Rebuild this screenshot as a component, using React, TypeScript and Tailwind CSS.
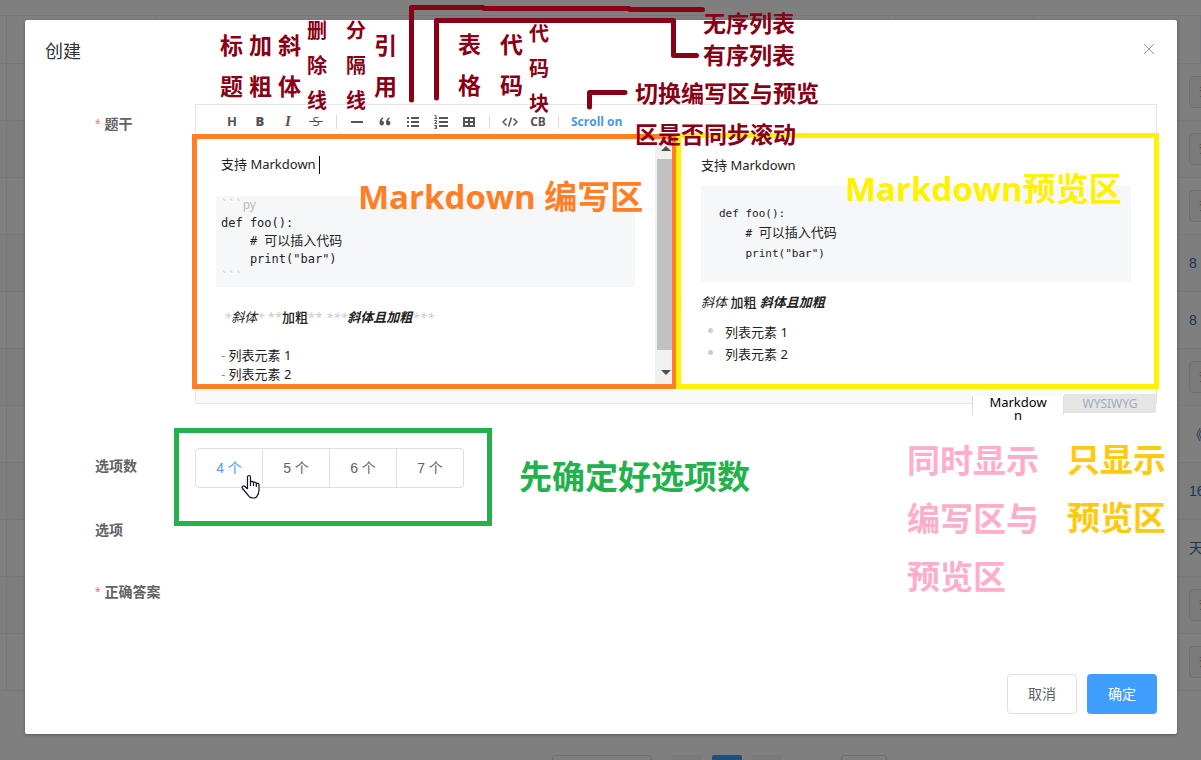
import React from "react";

const rows = [
  "button", "button", "button", "8", "8", "button", "《", "16", "天", "button", "button",
];

const columns = [
  "w-[7px]", "w-[150px]", "w-[152px]", "w-[145px]", "w-[145px]",
  "w-[145px]", "w-[145px]", "w-[145px]", "w-[145px]", "w-auto",
];

function BackgroundPage() {
  return (
    <div className="pt-[15px]" aria-hidden="true">
      <table className="w-full table-fixed border-separate border-spacing-0 border-t border-[#ebeef5]">
        <thead>
          <tr>
            {columns.map((width, i) => (
              <th key={i} className={`${width} h-12 border-r border-b border-[#ebeef5] p-0`} />
            ))}
          </tr>
        </thead>
        <tbody>
          {rows.map((value, r) => (
            <tr key={r} className="odd:bg-white even:bg-[#fafafa]">
              {columns.slice(1).map((_, c) => (
                <td key={c} className="h-[57px] border-r border-b border-[#ebeef5] p-0" />
              ))}
              <td className="h-[57px] overflow-hidden border-b border-[#ebeef5] py-0 pr-0 pl-[10px] text-sm whitespace-nowrap text-[#2f6ba8]">
                {value === "button" ? (
                  <button tabIndex={-1} className="block h-8 w-14 rounded border border-[#dcdfe6] bg-[#f5f5f5] text-left text-xs text-[#c98a5a]">
                    <span className="pl-[9px]">查看</span>
                  </button>
                ) : (
                  value
                )}
              </td>
            </tr>
          ))}
        </tbody>
      </table>
      <div className="flex justify-center pt-16 pl-[238px]">
        <div className="h-7 w-[100px] rounded-[3px] border border-[#dcdfe6]" />
        <div className="ml-5 h-7 w-[30px] rounded-xs bg-[#f4f4f5]" />
        <div className="ml-[10px] h-7 w-[30px] rounded-xs bg-[#409eff]" />
        <div className="ml-[10px] h-7 w-[30px] rounded-xs bg-[#f4f4f5]" />
        <div className="ml-[59px] h-7 w-[46px] rounded-[3px] border border-[#dcdfe6]" />
      </div>
    </div>
  );
}

function ToolButton({ label, children }: { label: string; children: React.ReactNode }) {
  return (
    <button
      type="button"
      aria-label={label}
      className="flex h-8 w-7 shrink-0 items-center justify-center text-[13px] font-bold text-[#555]"
    >
      {children}
    </button>
  );
}

function Divider() {
  return (
    <span className="flex w-[13px] shrink-0 justify-center">
      <span className="h-[14px] w-px bg-[#ddd]" />
    </span>
  );
}

function Toolbar() {
  return (
    <div className="flex h-8 items-center pt-px pl-[22px] font-['Open_Sans','Noto_Sans_CJK_SC',sans-serif]">
      <ToolButton label="标题"><span>H</span></ToolButton>
      <ToolButton label="加粗"><span className="font-extrabold">B</span></ToolButton>
      <ToolButton label="斜体"><span className="font-['Liberation_Serif',serif] text-[15px] font-bold italic">I</span></ToolButton>
      <ToolButton label="删除线"><span className="font-normal line-through">&nbsp;S&nbsp;</span></ToolButton>
      <Divider />
      <ToolButton label="分隔线">
        <svg width="12" height="12" viewBox="0 0 12 12"><path d="M0 5h12v2H0z" fill="#555" /></svg>
      </ToolButton>
      <ToolButton label="引用">
        <svg width="12" height="10" viewBox="0 0 12 10" fill="#555">
          <path d="M4.8 1 3.9.6C1.600 1.500.5 3.500.5 6A2.300 2.300 0 1 0 3 3.800C3 2.700 3.700 1.600 4.800 1zM11.200 1l-.9-.4C8 1.500 6.900 3.500 6.900 6a2.300 2.300 0 1 0 2.500-2.200c0-1.100.7-2.200 1.800-2.800z" />
        </svg>
      </ToolButton>
      <ToolButton label="无序列表">
        <svg width="12" height="12" viewBox="0 0 12 12" fill="#555">
          <path d="M0 1h2v2H0zM4 1h8v2H4zM0 5h2v2H0zM4 5h8v2H4zM0 9h2v2H0zM4 9h8v2H4z" />
        </svg>
      </ToolButton>
      <ToolButton label="有序列表">
        <svg width="14" height="14" viewBox="0 0 14 14">
          <path d="M5 2h9v2H5zM5 6h9v2H5zM5 10h9v2H5z" fill="#555" />
          <path d="M.5.5H2v3M.3 3.500h3M.3 5.500H2.500V7L.7 8.500h2.500M.3 10.500h2.200v3H.3M1 12h1.500" fill="none" stroke="#555" />
        </svg>
      </ToolButton>
      <ToolButton label="表格">
        <svg width="12" height="10" viewBox="0 0 12 10">
          <path d="M1 1h10v8H1zM6 1v8M1 5h10" fill="none" stroke="#555" strokeWidth="2" />
        </svg>
      </ToolButton>
      <Divider />
      <ToolButton label="代码">
        <svg width="16" height="10" viewBox="0 0 16 10">
          <path d="M4.500 1.500 1 5l3.500 3.500M11.500 1.500 15 5l-3.500 3.500M9.400.5 6.600 9.500" fill="none" stroke="#555" strokeWidth="1.500" />
        </svg>
      </ToolButton>
      <ToolButton label="代码块"><span className="font-['Noto_Sans',sans-serif] text-xs">CB</span></ToolButton>
      <Divider />
      <button type="button" className="px-[6px] text-xs font-bold whitespace-nowrap text-[#4b96e6]">Scroll on</button>
    </div>
  );
}

function Mark({ children }: { children: React.ReactNode }) {
  return <span className="font-normal text-[#ccc]">{children}</span>;
}

function MarkdownPane() {
  return (
    <div className="flex w-1/2 shrink-0 overflow-hidden">
      <div
        role="textbox"
        aria-multiline="true"
        aria-label="Markdown"
        className="min-w-0 flex-1 px-5 pt-[18px] text-[13px] leading-[19px] whitespace-pre text-[#222]"
      >
        <div className="flex items-center pl-[5px]">
          支持 Markdown
          <span className="ml-[3px] h-[18px] w-px bg-black" />
        </div>
        <div className="mt-[22px] bg-[#f5f7f8] pb-px pl-[5px] font-['DejaVu_Sans_Mono','Noto_Sans_CJK_SC',monospace] text-xs leading-[18px]">
          <div className="text-[#bbb]"><Mark>```</Mark><span className="font-['Noto_Sans',sans-serif]">py</span></div>
          <div>def foo():</div>
          <div>{"    # "}<span className="text-[13px]">可以插入代码</span></div>
          <div>{'    print("bar")'}</div>
          <div><Mark>```</Mark></div>
        </div>
        <div className="mt-[21px] pl-2">
          <em><Mark>*</Mark>斜体<Mark>*</Mark></em>{" "}
          <strong className="font-medium"><Mark>**</Mark>加粗<Mark>**</Mark></strong>{" "}
          <em className="font-bold"><Mark>***</Mark>斜体且加粗<Mark>***</Mark></em>
        </div>
        <div className="mt-[19px] pl-[5px]"><span className="text-[#4b96e6]">-</span> 列表元素 1</div>
        <div className="pl-[5px]"><span className="text-[#4b96e6]">-</span> 列表元素 2</div>
      </div>
      <div className="flex w-[21px] shrink-0 flex-col items-center bg-[#f1f1f1] pt-[9px] pb-[9px]">
        <span className="border-x-[5px] border-b-[5px] border-x-transparent border-b-[#505050]" />
        <span className="mt-2 w-[17px] flex-1 bg-[#c1c1c1]" />
        <span className="mt-5 border-x-[5px] border-t-[5px] border-x-transparent border-t-[#505050]" />
      </div>
    </div>
  );
}

function PreviewPane() {
  return (
    <div className="w-1/2 px-[25px] pt-[18px] text-[13px] leading-5 text-[#222]">
      <p>支持 Markdown</p>
      <pre className="mt-[11px] bg-[#f5f7f8] p-[18px] font-['DejaVu_Sans_Mono','Noto_Sans_CJK_SC',monospace] text-[11px] leading-5">
        {"def foo():\n    # "}
        <span className="text-[13px] leading-none">可以插入代码</span>
        {'\n    print("bar")'}
      </pre>
      <p className="mt-[10px]">
        <em>斜体</em> <strong className="font-medium">加粗</strong> <em className="font-bold">斜体且加粗</em>
      </p>
      <ul className="mt-[9px] leading-[22px]">
        {["列表元素 1", "列表元素 2"].map((item) => (
          <li key={item} className="flex items-center pl-[7px]">
            <span className="mr-3 mb-1 h-[5px] w-[5px] rounded-full bg-[#ccc]" />
            {item}
          </li>
        ))}
      </ul>
    </div>
  );
}

function Editor() {
  return (
    <div className="border border-[#e5e5e5] font-['Noto_Sans','Noto_Sans_CJK_SC',sans-serif]">
      <Toolbar />
      <div className="-mt-px flex h-[249px] border-y border-[#e5e5e5]">
        <MarkdownPane />
        <PreviewPane />
      </div>
      <div className="flex h-[18px] items-start justify-end bg-[#f9f9f9] text-[13px]">
        <button type="button" className="mt-[11px] h-[19px] w-[92px] border-x border-[#ddd] bg-white px-[15px] leading-[13px] break-all text-black">
          Markdown
        </button>
        <button type="button" className="mt-[9px] h-[19px] w-[92px] bg-[#e5e5e5] text-xs leading-[19px] text-[#a0aabf]">
          WYSIWYG
        </button>
      </div>
    </div>
  );
}

function FormRow({ label, required, children }: { label: string; required?: boolean; children?: React.ReactNode }) {
  return (
    <div className="flex">
      <div className="w-[100px] shrink-0 text-sm leading-10 font-bold text-[#606266]">
        {required && <span className="mr-1 font-normal text-[#f56c6c]">*</span>}
        {label}
      </div>
      <div className="min-h-10 min-w-0 flex-1">{children}</div>
    </div>
  );
}

function Dialog() {
  return (
    <div role="dialog" aria-label="创建" className="mr-6 ml-[25px] rounded-xs bg-white shadow-[0_1px_3px_rgba(0,0,0,0.3)]">
      <header className="flex items-start justify-between px-5 pt-5 pb-[10px]">
        <h2 className="text-lg leading-6 text-[#303133]">创建</h2>
        <button type="button" aria-label="关闭" className="px-[3px]">
          <svg width="10" height="18" viewBox="0 0 10 18"><path d="m0 4 10 10M10 4 0 14" stroke="#909399" fill="none" /></svg>
        </button>
      </header>
      <form className="py-[30px] pr-5 pl-[70px]" onSubmit={(e) => e.preventDefault()}>
        <FormRow label="题干" required><Editor /></FormRow>
        <div className="mt-[42px]">
          <FormRow label="选项数">
            <div role="radiogroup" aria-label="选项数" className="mt-[2px] flex">
              {["4 个", "5 个", "6 个", "7 个"].map((option, i) => (
                <label
                  key={option}
                  className={`relative flex h-10 w-[67px] cursor-pointer items-center justify-center border-y border-r border-[#dcdfe6] text-sm first:w-[68px] first:rounded-l first:border-l last:rounded-r ${i === 0 ? "text-[#409eff]" : "text-[#606266]"}`}
                >
                  <input type="radio" name="optionCount" value={option} className="sr-only" />
                  {option}
                </label>
              ))}
            </div>
          </FormRow>
        </div>
        <div className="mt-[22px]"><FormRow label="选项" /></div>
        <div className="mt-[22px] mb-[22px]"><FormRow label="正确答案" required /></div>
      </form>
      <footer className="flex justify-end gap-[10px] px-5 pt-[10px] pb-5 text-sm">
        <button type="button" className="h-10 w-[70px] rounded border border-[#dcdfe6] text-[#606266]">取消</button>
        <button type="button" className="h-10 w-[70px] rounded bg-[#409eff] text-white">确定</button>
      </footer>
    </div>
  );
}

const notes = [
  { text: "标\n题", place: "left-[220px] top-[25px] text-[23px] leading-[41px] text-[#880015]" },
  { text: "加\n粗", place: "left-[249px] top-[25px] text-[23px] leading-[41px] text-[#880015]" },
  { text: "斜\n体", place: "left-[278px] top-[25px] text-[23px] leading-[41px] text-[#880015]" },
  { text: "删\n除\n线", place: "left-[307px] top-[13px] text-[20px] leading-[35px] text-[#880015]" },
  { text: "分\n隔\n线", place: "left-[346px] top-[13px] text-[20px] leading-[35px] text-[#880015]" },
  { text: "引\n用", place: "left-[374px] top-[25px] text-[23px] leading-[41px] text-[#880015]" },
  { text: "表\n格", place: "left-[458px] top-[24px] text-[23px] leading-[41px] text-[#880015]" },
  { text: "代\n码", place: "left-[500px] top-[24px] text-[23px] leading-[41px] text-[#880015]" },
  { text: "代\n码\n块", place: "left-[529px] top-[16px] text-[20px] leading-[35px] text-[#880015]" },
  { text: "无序列表", place: "left-[703px] top-[3px] text-[23px] leading-[41px] text-[#880015]" },
  { text: "有序列表", place: "left-[703px] top-[35px] text-[23px] leading-[41px] text-[#880015]" },
  { text: "切换编写区与预览\n区是否同步滚动", place: "left-[635px] top-[73px] text-[23px] leading-[41px] text-[#880015]" },
  { text: "Markdown 编写区", place: "left-[358px] top-[168px] text-[33px] leading-[58px] text-[#ff7f27]" },
  { text: "Markdown预览区", place: "left-[845px] top-[160px] text-[33px] leading-[58px] text-[#fff200]" },
  { text: "先确定好选项数", place: "left-[519px] top-[448px] text-[33px] leading-[58px] text-[#22b14c]" },
  { text: "同时显示\n编写区与\n预览区", place: "left-[907px] top-[432px] text-[33px] leading-[58px] text-[#ffaec9]" },
  { text: "只显示\n预览区", place: "left-[1067px] top-[431px] text-[33px] leading-[58px] text-[#ffc90e]" },
];

function Annotations() {
  return (
    <div className="pointer-events-none absolute inset-0 overflow-hidden">
      <div className="absolute top-[134px] left-[192px] h-[255px] w-[485px] border-[5px] border-[#ff7f27]" />
      <div className="absolute top-[133px] left-[676px] h-[256px] w-[483px] border-[5px] border-[#fff200]" />
      <div className="absolute top-[428px] left-[174px] h-[98px] w-[318px] border-[5px] border-[#22b14c]" />
      <svg className="absolute top-0 left-0" width="720" height="120" viewBox="0 0 720 120" fill="none" stroke="#880015" strokeWidth="5" strokeLinecap="round" strokeLinejoin="round">
        <path d="M411.500 100V7.500H483L484 8.500H629L630 9.500H702.500" />
        <path d="M436.500 98V20.500H673.500V55.500H696.500" />
        <path d="M589.500 107V92.500H625" />
      </svg>
      {notes.map((note) => (
        <div key={note.text} className={`absolute font-['Open_Sans','Noto_Sans_CJK_SC',sans-serif] font-bold whitespace-pre ${note.place}`}>
          {note.text}
        </div>
      ))}
      <svg className="absolute top-[474px] left-[241px]" width="19" height="25" viewBox="0 0 19 25">
        <path
          d="M6.500 15V3.200c0-2.300 3-2.300 3 0V8c.6-1 2.800-.8 3 .6.8-.8 2.700-.5 2.800.8 1-.6 2.700 0 2.700 1.300V16c0 4-1.500 5.500-2.500 7-1.500 1.300-5.500 1.300-7 0C7 21 5.500 19 4 17.500L1.500 14.500c-1.300-1.800 1-3.300 2.500-2l2.500 2.500"
          fill="#fff" stroke="#112" strokeWidth="1.200" strokeLinejoin="round"
        />
        <path d="M9.500 7v5M12.500 8.500V12M15.300 9.500V13" stroke="#112" strokeWidth="1.200" />
      </svg>
    </div>
  );
}

export default function App() {
  return (
    <div className="relative h-screen overflow-hidden bg-white font-['Liberation_Sans','Noto_Sans_CJK_SC',sans-serif]">
      <BackgroundPage />
      <div className="absolute inset-0 bg-black/50 pt-5">
        <Dialog />
      </div>
      <Annotations />
    </div>
  );
}
